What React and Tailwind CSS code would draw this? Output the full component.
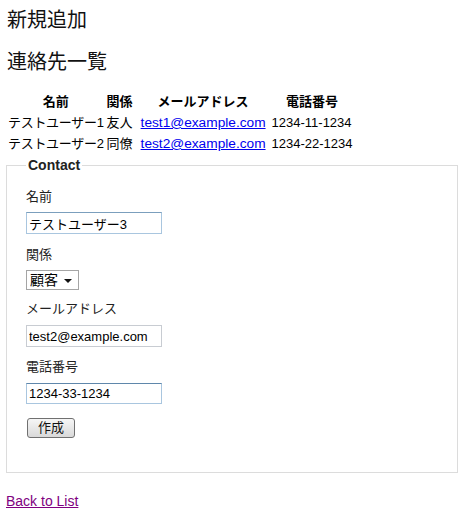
const font = { fontFamily: '"Liberation Sans", "Noto Sans CJK JP", sans-serif' };

const contacts = [
  { name: "テストユーザー1", relation: "友人", email: "test1@example.com", phone: "1234-11-1234" },
  { name: "テストユーザー2", relation: "同僚", email: "test2@example.com", phone: "1234-22-1234" },
];

function Field({ label, className, children }) {
  return (
    <div className={className}>
      <div className="h-[16px] text-[13px] leading-[16px] text-[#222]">{label}</div>
      {children}
    </div>
  );
}

export default function App() {
  return (
    <div className="min-h-[520px] bg-white pl-[6px] pr-px text-black" style={font}>
      <h2 className="pt-[8px] pl-px text-[20px] leading-[24px] text-[#111]">新規追加</h2>
      <h2 className="mt-[18px] pl-px text-[20px] leading-[24px] text-[#111]">連絡先一覧</h2>

      <table className="mt-[17px] border-separate border-spacing-x-[2px] border-spacing-y-0 text-[13px] leading-[21px]">
        <thead>
          <tr className="h-[21px]">
            <th className="px-0 font-bold">名前</th>
            <th className="pl-px pr-[3px] font-bold">関係</th>
            <th className="px-[3px] font-bold">メールアドレス</th>
            <th className="px-px font-bold">電話番号</th>
          </tr>
        </thead>
        <tbody>
          {contacts.map((c) => (
            <tr key={c.email} className="h-[21px]">
              <td className="px-0 tracking-[-0.3px]">{c.name}</td>
              <td className="pl-px pr-[3px]">{c.relation}</td>
              <td className="px-[3px]">
                <a href="#" className="text-[13.7px] text-[#0000ee] underline">{c.email}</a>
              </td>
              <td className="px-px">{c.phone}</td>
            </tr>
          ))}
        </tbody>
      </table>

      <fieldset className="mt-[3px] border border-[#dcdcdc] pl-[19px] pr-[19px] pb-[34px]">
        <legend className="px-[2px] text-[14px] font-bold leading-[16px] text-[#222]">Contact</legend>

        <Field label="名前" className="mt-[16px]">
          <input
            defaultValue="テストユーザー3"
            className="mt-[7px] block h-[22px] w-[136px] border border-[#a9c6df] border-t-[#7b9fbd] px-[2px] text-[13px] outline-none"
          />
        </Field>

        <Field label="関係" className="mt-[13px]">
          <div className="relative mt-[7px] h-[20px] w-[53px] border border-[#a5a5a5] bg-white">
            <select className="block h-[18px] w-full appearance-none bg-transparent py-0 pl-[3px] text-[14px] leading-[18px] outline-none">
              <option>顧客</option>
              <option>友人</option>
              <option>同僚</option>
            </select>
            <svg className="pointer-events-none absolute right-[6px] top-[8px]" width="8" height="4" viewBox="0 0 8 4">
              <path d="M0 0h8L4 4z" fill="#111" />
            </svg>
          </div>
        </Field>

        <Field label="メールアドレス" className="mt-[11px]">
          <input
            defaultValue="test2@example.com"
            className="mt-[8px] block h-[22px] w-[136px] border border-[#c8ccd2] px-[2px] text-[13px] outline-none"
          />
        </Field>

        <Field label="電話番号" className="mt-[12px]">
          <input
            defaultValue="1234-33-1234"
            className="mt-[8px] block h-[21px] w-[136px] border border-[#a9c6df] border-t-[#5f87ab] px-[2px] text-[13px] outline-none"
          />
        </Field>

        <button className="ml-px mt-[14px] block h-[20px] w-[48px] rounded-[3px] border border-[#707070] bg-gradient-to-b from-[#f6f6f6] to-[#d9d9d9] text-[13px] leading-[16px] text-[#111]">
          作成
        </button>
      </fieldset>

      <a href="#" className="mt-[20px] inline-block text-[14px] leading-[16px] text-[#800080] underline">
        Back to List
      </a>
    </div>
  );
}
